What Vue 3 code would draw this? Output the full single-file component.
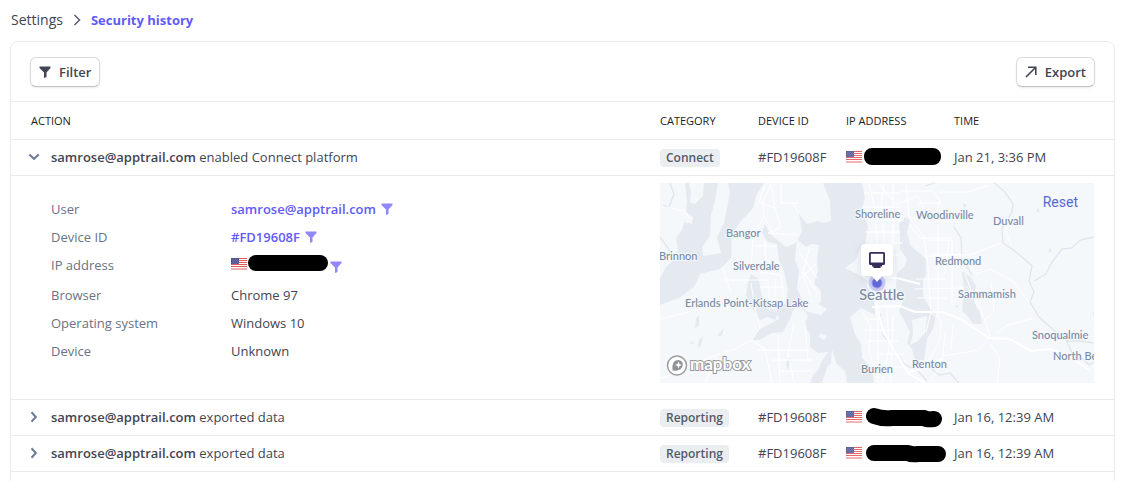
<script setup>
import { ref } from 'vue'

const openRow = ref(0)

const rows = [
  {
    verb: 'enabled Connect platform',
    category: 'Connect',
    time: 'Jan 21, 3:36 PM',
    mask: 'M8 10 H69 M8 11 H69 M64 10 H69'
  },
  {
    verb: 'exported data',
    category: 'Reporting',
    time: 'Jan 16, 12:39 AM',
    mask: 'M10 10 Q18 13 28 12 H60 Q63 14 70 13'
  },
  {
    verb: 'exported data',
    category: 'Reporting',
    time: 'Jan 16, 12:39 AM',
    mask: 'M10 11 H44 Q48 13 54 12 H74'
  }
]

const email = 'samrose@apptrail.com'
const device = '#FD19608F'

const places = [
  { name: 'Shoreline', x: 195, y: 35 },
  { name: 'Woodinville', x: 256, y: 36 },
  { name: 'Duvall', x: 333, y: 42 },
  { name: 'Bangor', x: 66, y: 54 },
  { name: 'Brinnon', x: -1, y: 77 },
  { name: 'Silverdale', x: 73, y: 87 },
  { name: 'Redmond', x: 275, y: 82 },
  { name: 'Sammamish', x: 298, y: 115 },
  { name: 'Erlands Point-Kitsap Lake', x: 25, y: 124 },
  { name: 'Snoqualmie', x: 372, y: 156 },
  { name: 'North Be', x: 393, y: 177 },
  { name: 'Burien', x: 201, y: 190 },
  { name: 'Renton', x: 252, y: 185 }
]
</script>

<template>
  <div class="page">
    <svg class="defs" width="0" height="0" aria-hidden="true">
      <symbol id="funnel" viewBox="0 0 12 12">
        <path d="M0.5 0.5H11.5V2L7.5 6.5V11L5 12V6.5L0.5 2Z" />
      </symbol>
      <symbol id="flag" viewBox="0 0 16 12">
        <path fill="#fff" d="M0 0H16V12H0Z" />
        <path stroke="#e05a5c" stroke-width="1" d="M0 .5H16M0 2.5H16M0 4.5H16M0 6.5H16M0 8.5H16M0 11H16" />
        <path fill="#4a4d8f" d="M0 0H8V6H0Z" />
        <path stroke="#a9abd0" stroke-width=".6" stroke-dasharray=".8 1" d="M.7 1.2H8M1.5 2.6H8M.7 4H8M1.5 5.2H8" />
      </symbol>
    </svg>

    <nav class="crumbs" aria-label="Breadcrumb">
      <a href="#settings">Settings</a>
      <svg width="8" height="12" viewBox="0 0 8 12"><path d="M1.5 1L6.5 6L1.5 11" fill="none" stroke="#5a5f6e" stroke-width="1.5" /></svg>
      <a href="#history" class="current" aria-current="page">Security history</a>
    </nav>

    <main class="card">
      <div class="toolbar">
        <button type="button" class="btn">
          <svg width="12" height="12" fill="#414552"><use href="#funnel" /></svg>
          Filter
        </button>
        <button type="button" class="btn">
          <svg width="12" height="12" viewBox="0 0 12 12"><path d="M1 11L10.5 1.5M3 1.2H10.8V9" fill="none" stroke="#414552" stroke-width="1.6" /></svg>
          Export
        </button>
      </div>

      <table>
        <colgroup>
          <col />
          <col class="c-cat" />
          <col class="c-dev" />
          <col class="c-ip" />
          <col class="c-time" />
        </colgroup>
        <thead>
          <tr>
            <th class="first">ACTION</th>
            <th>CATEGORY</th>
            <th>DEVICE ID</th>
            <th>IP ADDRESS</th>
            <th>TIME</th>
          </tr>
        </thead>
        <tbody>
          <template v-for="(row, i) in rows" :key="i">
            <tr class="row">
              <td class="first">
                <div class="action">
                  <button type="button" class="toggle" :aria-expanded="openRow === i" aria-label="Toggle details" @click="openRow = openRow === i ? -1 : i">
                    <svg width="12" height="12" viewBox="0 0 12 12" fill="none" stroke="#6c7a92" stroke-width="2">
                      <path v-if="openRow === i" d="M1.3 3.5L6 7.8L10.7 3.5" />
                      <path v-else d="M3.5 1.3L7.8 6L3.5 10.7" />
                    </svg>
                  </button>
                  <span><strong>{{ email }}</strong> {{ row.verb }}</span>
                </div>
              </td>
              <td><span class="tag">{{ row.category }}</span></td>
              <td>{{ device }}</td>
              <td>
                <div class="ip">
                  <svg class="flag" width="16" height="12"><use href="#flag" /></svg>
                  <svg class="mask" width="84" height="22" viewBox="0 0 84 22"><path :d="row.mask" /></svg>
                </div>
              </td>
              <td>{{ row.time }}</td>
            </tr>
            <tr v-if="openRow === i" class="detail">
              <td>
                <dl>
                  <dt>User</dt>
                  <dd><a href="#user">{{ email }}</a><button type="button" class="pick" aria-label="Filter by user"><svg width="12" height="12"><use href="#funnel" /></svg></button></dd>
                  <dt>Device ID</dt>
                  <dd><a href="#device">{{ device }}</a><button type="button" class="pick" aria-label="Filter by device"><svg width="12" height="12"><use href="#funnel" /></svg></button></dd>
                  <dt>IP address</dt>
                  <dd class="ip-line">
                    <svg width="16" height="12"><use href="#flag" /></svg>
                    <span class="pill"></span>
                    <button type="button" class="pick low" aria-label="Filter by IP address"><svg width="12" height="12"><use href="#funnel" /></svg></button>
                  </dd>
                  <dt>Browser</dt>
                  <dd>Chrome 97</dd>
                  <dt>Operating system</dt>
                  <dd>Windows 10</dd>
                  <dt>Device</dt>
                  <dd>Unknown</dd>
                </dl>
              </td>
              <td colspan="4">
                <div class="map">
                  <svg class="canvas" viewBox="0 0 434 200" preserveAspectRatio="xMidYMid slice">
                    <rect width="434" height="200" fill="#f4f8fb" />
                    <g fill="#e5eaf1">
                      <path d="M25 0L27 18L26 29L33 34L32 41L24 39L22 47L16 55L18 67L12 78L6 84L0 95V122L19 115L34 104L40 91L60 86L71 75L72 52L80 39L93 25L96 13L104 0H68L70 10L64 40L57 54L61 70L43 73L42 65L50 52L51 32L55 18L58 0H44L43 13L35 21L30 20L31 8L29 0Z" />
                      <path d="M163 0L170 18L171 38L163 40L158 38L147 41L139 31L142 48L136 60L126 64L110 51L105 41L102 50L108 59L117 61L119 77L124 88L128 107L126 119L116 126L119 136L108 142L100 146L91 157L99 157L112 150L123 149L130 136L133 127L139 121L148 133L144 142L150 151V164L158 170L168 169L162 178L158 187L153 192L150 200H214L212 185L202 175L201 161L195 151L190 134L201 125L215 132L214 111L207 104L208 98L197 91L185 85L196 77L199 68L205 62L208 44L202 25L205 15L202 0Z" />
                      <path d="M91 91L99 96L101 109L104 120L118 130L115 137L108 134L100 137L91 124L86 113L88 99Z" />
                      <path d="M239 41L245 34L250 37L247 49L250 62L258 69L266 76V91L263 98V112L268 122L276 132L273 146L267 156L264 177L255 177L252 166L247 160L250 149L244 137L239 128L243 117L236 105L237 90L244 84L247 76L240 66L240 54Z" />
                      <path d="M302 88L310 94L316 102L314 118L320 130L322 141L313 141L307 132L302 128L304 107Z" />
                      <path d="M36 135L39 132V143L35 145ZM39 157L43 153L41 163L38 165ZM59 150L64 145L62 152L58 154ZM30 160L34 158L33 162ZM128 175H131L128 188L126 182ZM390 65L392 68L388 70ZM303 20L307 22L304 25ZM378 25L380 30L376 28ZM295 122L299 123L296 125ZM432 127L434 130V134ZM103 75L105 74L104 80Z" />
                    </g>
                    <g fill="#f4f8fb">
                      <path d="M137 56L146 64L151 61L159 62L157 77L158 88L154 101L161 108V118L158 121L167 126L161 132L152 130L145 128L142 117L137 105L139 87L135 77Z" />
                      <path d="M160 150L167 153L164 157L159 154ZM172 166L176 180L185 188L187 200H162L167 184L171 180ZM252 137L267 133L265 150L258 158L250 162L253 151Z" />
                    </g>
                    <g fill="none" stroke="#e0e5ee" stroke-width="1.3">
                      <path d="M334 0L344 8L353 21L352 29L342 45L343 60L352 66L361 73L372 83L369 98L374 109L370 119L379 134L388 142L396 149L407 158L421 158L434 160M374 98L386 91L392 79L402 66L412 65L420 57L434 54M294 44L301 55L302 75L312 92M407 158L412 170L420 173L429 182L434 179M220 130L223 152L235 167L244 181L258 188L267 198M267 182L279 192L290 190L299 200M10 0L14 11L9 24L3 22M0 54L8 65L14 76M265 3L275 0" />
                    </g>
                    <g fill="none" stroke="#fff" stroke-width="1">
                      <path d="M0 136L25 130L46 124M112 0L103 18L104 33L93 55L91 84M91 100L96 130L100 144L92 157M0 196L51 174L75 166L91 157L105 166L112 200M63 97L108 97M63 85L71 110M105 2L99 19L115 25L121 44L108 50L138 52M115 24L112 5M121 0V20H138M133 20L139 31M104 34L114 52M100 89L121 92L124 120M108 96L110 128M100 104H124M115 96V121M100 120H126M139 69L158 96M150 64L143 88L158 111M138 98L156 81M142 89L153 120M97 167H150M118 152L120 200M134 140L128 170L134 200M145 140L148 180M112 177H153M120 188H151M45 200L57 174M23 26L30 36M7 24L23 28M105 58V78M95 63H117" />
                      <path d="M209 0L215 27L218 71L224 96M224 0L221 23L226 74M233 0V72M202 24H241M205 49H240M209 60H243M211 72H239M217 89H235M215 37H244M204 10H241M246 0L249 34L264 54L268 83M218 0L236 21L259 13M241 8H273L280 18L274 37M249 33L264 39L294 38M265 30L259 14M268 83L270 118L271 129L266 149M254 106L305 105M256 96H286M257 115H287M266 57H292V122M278 41V134M289 58L284 92M265 73H301M250 42L260 55L293 55" />
                      <path d="M215 123L218 138L218 200M223 108L227 127L229 165L222 200M233 132L231 200M203 129L211 145L209 168L218 198M204 136H221M205 147H236M207 158H238M217 171H243M218 184H246M271 130L281 137L280 156L270 176L248 189M285 150L282 182L270 197M293 143L291 167M325 138L330 153L318 167L284 173M330 160L340 176L337 200M331 99L334 128L324 139M306 103L317 117L325 138M295 65L316 91L330 86L354 99L369 119M280 9L308 9L329 2M258 20H281M273 71L310 72L341 60M253 38L270 25M351 64L346 48L352 36M305 91L318 126M336 151L346 143L373 135" />
                    </g>
                    <g fill="none" stroke="#fff" stroke-width="2">
                      <path d="M212 93L237 95L260 101M212 124L240 123L255 129H283L302 137L329 155L350 156L371 168L391 166L412 175L429 187M248 190L266 184L283 176M265 200L248 190L223 148L216 119" />
                    </g>
                    <g class="labels">
                      <text v-for="p in places" :key="p.name" :x="p.x" :y="p.y">{{ p.name }}</text>
                      <text class="city" x="199" y="117">Seattle</text>
                    </g>
                    <circle cx="217" cy="100" r="8.5" fill="#b3b3f0" opacity=".65" />
                    <circle cx="217" cy="100" r="5" fill="#626ae0" stroke="#9a9deb" />
                    <path class="marker" d="M205 61H229Q233 61 233 65V89Q233 93 229 93H222L217 99L212 93H205Q201 93 201 89V65Q201 61 205 61Z" />
                    <path fill="#342c5c" fill-rule="evenodd" d="M210.500 69H223.500Q225 69 225 70.500V80.500Q225 82 223.500 82H222V83.500H220.500V85H213.500V83.500H212V82H210.500Q209 82 209 80.500V70.500Q209 69 210.500 69ZM210.800 70.800V79.500H223.200V70.800Z" />
                    <g>
                      <circle cx="17" cy="182.500" r="9.500" fill="#fff" stroke="#9b9da1" stroke-width="1.500" />
                      <path fill="#909296" d="M12.500 187.500Q11.500 177 18 177Q23 177.500 22.800 182Q22 188.500 12.500 187.500Z" />
                      <path fill="#fff" d="M18.500 178.500L19.500 181L22 182L19.500 183L18.500 185.500L17.500 183L15 182L17.500 181Z" />
                      <text class="brand" x="30" y="187">mapbox</text>
                    </g>
                  </svg>
                  <button type="button" class="reset">Reset</button>
                </div>
              </td>
            </tr>
          </template>
          <tr class="row">
            <td class="first"></td>
            <td><span class="tag stub"></span></td>
            <td></td>
            <td></td>
            <td></td>
          </tr>
        </tbody>
      </table>
    </main>
  </div>
</template>

<style>
body {
  margin: 0;
  background: #fff;
}
</style>

<style scoped>
.page {
  height: 100vh;
  overflow: hidden;
  font-family: 'Open Sans', 'Noto Sans', sans-serif;
  font-size: 13px;
  line-height: 20px;
  color: #414552;
}
.defs {
  position: absolute;
}
svg {
  display: block;
  flex: none;
}
button {
  font: inherit;
  color: inherit;
  cursor: pointer;
}
a {
  color: inherit;
  text-decoration: none;
}
.crumbs {
  display: flex;
  align-items: center;
  gap: 10px;
  box-sizing: border-box;
  height: 41px;
  padding: 0 0 2px 11px;
  font-size: 14px;
}
.crumbs .current {
  color: #625afa;
  font-size: 13px;
  font-weight: 700;
}
.card {
  margin: 0 19px 0 10px;
  border: 1px solid #ebebec;
  border-radius: 8px;
}
.toolbar {
  display: flex;
  justify-content: space-between;
  padding: 15px 19px 14px;
}
.btn {
  display: flex;
  align-items: center;
  gap: 8px;
  height: 30px;
  padding: 0 8px;
  border: 1px solid #d8dadd;
  border-bottom-color: #c0c2c5;
  border-radius: 6px;
  background: #fff;
  font-weight: 600;
  box-shadow: 0 1px 2px rgba(0, 0, 0, 0.08);
}
table {
  width: 100%;
  table-layout: fixed;
  border-collapse: separate;
  border-spacing: 0;
}
.c-cat {
  width: 98px;
}
.c-dev {
  width: 88px;
}
.c-ip {
  width: 108px;
}
.c-time {
  width: 160px;
}
th,
td {
  box-sizing: border-box;
  padding: 0;
  border-top: 1px solid #ebebec;
  text-align: left;
  white-space: nowrap;
}
th {
  height: 38px;
  font-size: 11px;
  font-weight: 400;
  color: #1a1b25;
}
.row td {
  height: 36px;
  padding-bottom: 2px;
}
.first {
  padding-left: 20px;
}
.row .first {
  padding-left: 17px;
}
.action {
  display: flex;
  align-items: center;
  gap: 11px;
}
strong {
  font-weight: 600;
}
.toggle,
.pick {
  display: flex;
  padding: 0;
  border: 0;
  background: none;
}
.tag {
  display: inline-block;
  padding: 0 6px;
  border-radius: 4px;
  background: #ebeef1;
  color: #545969;
  font-size: 12px;
  font-weight: 600;
  line-height: 18px;
  vertical-align: middle;
}
.stub {
  width: 18px;
  height: 18px;
}
.ip {
  display: flex;
  align-items: center;
}
.flag {
  opacity: 0.9;
}
.mask {
  margin-left: 2px;
}
.mask path {
  fill: none;
  stroke: #000;
  stroke-width: 16;
  stroke-linecap: round;
  stroke-linejoin: round;
}
.detail td {
  height: 224px;
  vertical-align: top;
}
dl {
  display: grid;
  grid-template-columns: 180px 1fr;
  grid-template-rows: 28px 28px 30px 28px 28px 28px;
  line-height: 28px;
  margin: 19px 0 0 40px;
}
dt {
  color: #6a7383;
}
dd {
  display: flex;
  align-items: center;
  margin: 0;
}
dd a {
  color: #625afa;
  font-weight: 600;
}
.pick {
  margin-left: 5px;
  fill: #9087fb;
}
.ip-line {
  align-items: flex-start;
  gap: 1px;
  padding-top: 4px;
}
.ip-line > svg {
  margin-top: 3px;
}
.pill {
  width: 80px;
  height: 16px;
  border-radius: 8px;
  background: #000;
}
.low {
  margin: 6px 0 0 1px;
}
.map {
  position: relative;
  margin: 7px 20px 0 0;
}
.canvas {
  width: 100%;
  height: 200px;
}
.labels text {
  fill: #7b8aa3;
  stroke: #f4f8fb;
  stroke-width: 2;
  paint-order: stroke;
  font-family: Lato, 'Noto Sans', sans-serif;
  font-size: 11px;
  font-weight: 500;
}
.labels .city {
  font-size: 15px;
}
.marker {
  fill: #fff;
  filter: drop-shadow(0 2px 4px rgba(60, 66, 87, 0.15));
}
.brand {
  fill: #fff;
  stroke: #96989c;
  stroke-width: 2;
  paint-order: stroke;
  font-family: Lato, sans-serif;
  font-size: 17px;
  font-weight: 700;
}
.reset {
  position: absolute;
  top: 9px;
  right: 16px;
  padding: 0;
  border: 0;
  background: none;
  color: #5469d4;
  font-family: Roboto, sans-serif;
  font-size: 14px;
}
</style>
